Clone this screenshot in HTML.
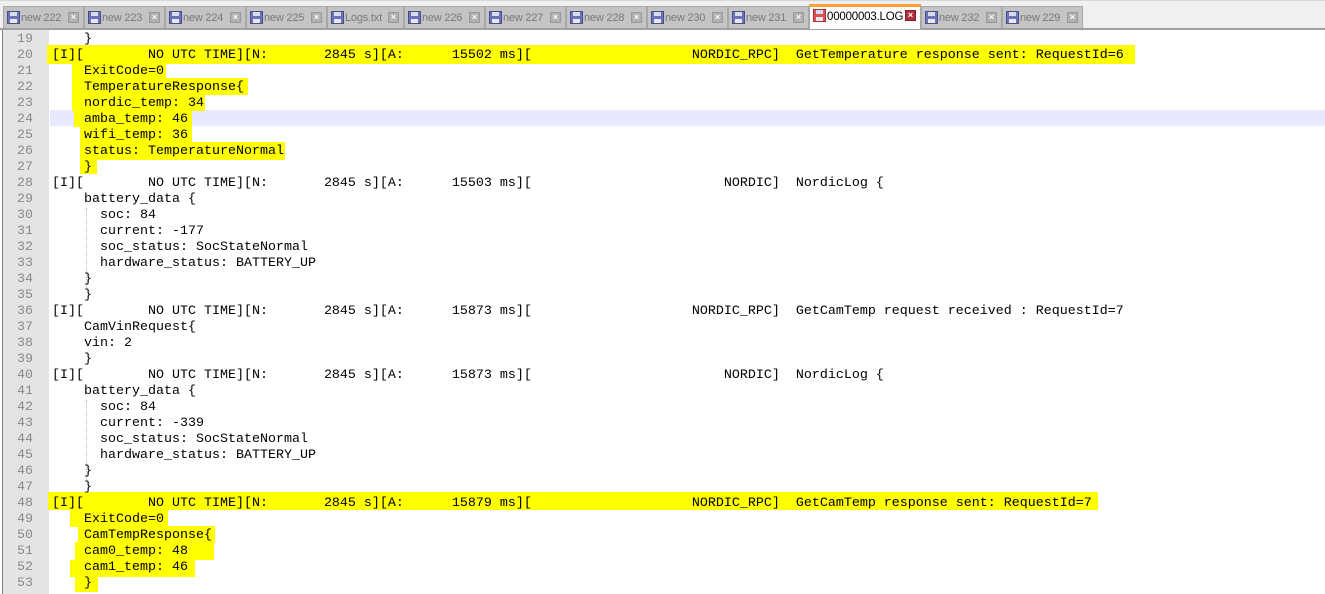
<!DOCTYPE html>
<html><head><meta charset="utf-8"><style>
*{margin:0;padding:0;box-sizing:border-box}
body{width:1325px;height:594px;overflow:hidden;background:#fff;position:relative;font-family:"Liberation Mono",monospace}
#bar{position:absolute;left:0;top:0;width:1325px;height:30px;background:#f0f0f0;border-top:1px solid #d8d8d8}
#bar .line{position:absolute;left:0;top:27px;width:1325px;height:2px;background:#a0a0a0}
.tab{position:absolute;top:5px;height:22px;background:#c4c4c4;border:1px solid #a8a8a8;border-bottom:none;font:11px "Liberation Sans",sans-serif;letter-spacing:-0.2px;color:#7a7a7a;line-height:22px;padding-left:17px;white-space:nowrap}
.tab .ic{position:absolute;left:3px;top:4px;width:13px;height:13px;background:#6b74b8;border:1px solid #4b4f86}
.tab .ic:before{content:"";position:absolute;left:2px;top:0;width:7px;height:4px;background:#d8dcf0}
.tab .ic:after{content:"";position:absolute;left:2px;top:7px;width:7px;height:4px;background:#e8e8f0}
.tab .x{position:absolute;right:4px;top:5px;width:11px;height:11px;background:#b0b0b0;border:1px solid #999;color:#fff;font:bold 9px/9px "Liberation Sans",sans-serif;text-align:center;letter-spacing:0}
.tab.act{background:#fff;top:3px;height:25px;border-top:3px solid #f9a23c;color:#000;line-height:20px;font-size:11.5px}
.tab.act .ic{background:#e05050;border-color:#a03030;top:2px}
.tab.act .x{background:#b03040;border-color:#802030;top:3px}
#gut{position:absolute;left:2px;top:30px;width:47px;height:564px;background:#e4e4e4;border-left:1px solid #808080}
#ed{position:absolute;left:0;top:32px;width:1325px}
.l{position:relative;height:16px;font-size:13.33px;line-height:16px;white-space:pre;color:#000}
.n{position:absolute;left:0;width:33px;text-align:right;color:#8a8a8a}
.t{position:absolute;left:52px}
.hl{position:absolute;background:#ffff00}
.dot{position:absolute;left:86px;width:0;border-left:1px dotted #bbb}
</style></head><body>
<div id="bar"><div class="line"></div>
<div class="tab" style="left:3px;width:81px"><span class="ic"></span>new 222<span class="x">×</span></div>
<div class="tab" style="left:84px;width:81px"><span class="ic"></span>new 223<span class="x">×</span></div>
<div class="tab" style="left:165px;width:81px"><span class="ic"></span>new 224<span class="x">×</span></div>
<div class="tab" style="left:246px;width:81px"><span class="ic"></span>new 225<span class="x">×</span></div>
<div class="tab" style="left:327px;width:77px"><span class="ic"></span>Logs.txt<span class="x">×</span></div>
<div class="tab" style="left:404px;width:81px"><span class="ic"></span>new 226<span class="x">×</span></div>
<div class="tab" style="left:485px;width:81px"><span class="ic"></span>new 227<span class="x">×</span></div>
<div class="tab" style="left:566px;width:81px"><span class="ic"></span>new 228<span class="x">×</span></div>
<div class="tab" style="left:647px;width:81px"><span class="ic"></span>new 230<span class="x">×</span></div>
<div class="tab" style="left:728px;width:81px"><span class="ic"></span>new 231<span class="x">×</span></div>
<div class="tab act" style="left:809px;width:112px"><span class="ic"></span>00000003.LOG<span class="x">×</span></div>
<div class="tab" style="left:921px;width:81px"><span class="ic"></span>new 232<span class="x">×</span></div>
<div class="tab" style="left:1002px;width:81px"><span class="ic"></span>new 229<span class="x">×</span></div>
</div>
<div id="gut"></div>
<div style="position:absolute;left:50px;top:110px;width:1275px;height:16px;background:#e8e8ff"></div>
<div class="hl" style="left:47px;top:45px;width:1088px;height:19px"></div>
<div class="hl" style="left:72px;top:62px;width:94px;height:17px"></div>
<div class="hl" style="left:72px;top:78px;width:176px;height:17px"></div>
<div class="hl" style="left:72px;top:94px;width:133px;height:17px"></div>
<div class="hl" style="left:74px;top:110px;width:118px;height:17px"></div>
<div class="hl" style="left:80px;top:126px;width:112px;height:17px"></div>
<div class="hl" style="left:80px;top:142px;width:205px;height:18px"></div>
<div class="hl" style="left:80px;top:158px;width:17px;height:16px"></div>
<div class="hl" style="left:48px;top:492px;width:1050px;height:18px"></div>
<div class="hl" style="left:70px;top:510px;width:98px;height:17px"></div>
<div class="hl" style="left:78px;top:526px;width:137px;height:17px"></div>
<div class="hl" style="left:75px;top:542px;width:139px;height:18px"></div>
<div class="hl" style="left:70px;top:560px;width:125px;height:17px"></div>
<div class="hl" style="left:75px;top:576px;width:23px;height:16px"></div>
<div class="dot" style="top:208px;height:80px"></div>
<div class="dot" style="top:400px;height:80px"></div>
<div id="ed">
<div class="l"><span class="n">19</span><span class="t">    }</span></div>
<div class="l"><span class="n">20</span><span class="t">[I][        NO UTC TIME][N:       2845 s][A:      15502 ms][                    NORDIC_RPC]  GetTemperature response sent: RequestId=6</span></div>
<div class="l"><span class="n">21</span><span class="t">    ExitCode=0</span></div>
<div class="l"><span class="n">22</span><span class="t">    TemperatureResponse{</span></div>
<div class="l"><span class="n">23</span><span class="t">    nordic_temp: 34</span></div>
<div class="l"><span class="n">24</span><span class="t">    amba_temp: 46</span></div>
<div class="l"><span class="n">25</span><span class="t">    wifi_temp: 36</span></div>
<div class="l"><span class="n">26</span><span class="t">    status: TemperatureNormal</span></div>
<div class="l"><span class="n">27</span><span class="t">    }</span></div>
<div class="l"><span class="n">28</span><span class="t">[I][        NO UTC TIME][N:       2845 s][A:      15503 ms][                        NORDIC]  NordicLog {</span></div>
<div class="l"><span class="n">29</span><span class="t">    battery_data {</span></div>
<div class="l"><span class="n">30</span><span class="t">      soc: 84</span></div>
<div class="l"><span class="n">31</span><span class="t">      current: -177</span></div>
<div class="l"><span class="n">32</span><span class="t">      soc_status: SocStateNormal</span></div>
<div class="l"><span class="n">33</span><span class="t">      hardware_status: BATTERY_UP</span></div>
<div class="l"><span class="n">34</span><span class="t">    }</span></div>
<div class="l"><span class="n">35</span><span class="t">    }</span></div>
<div class="l"><span class="n">36</span><span class="t">[I][        NO UTC TIME][N:       2845 s][A:      15873 ms][                    NORDIC_RPC]  GetCamTemp request received : RequestId=7</span></div>
<div class="l"><span class="n">37</span><span class="t">    CamVinRequest{</span></div>
<div class="l"><span class="n">38</span><span class="t">    vin: 2</span></div>
<div class="l"><span class="n">39</span><span class="t">    }</span></div>
<div class="l"><span class="n">40</span><span class="t">[I][        NO UTC TIME][N:       2845 s][A:      15873 ms][                        NORDIC]  NordicLog {</span></div>
<div class="l"><span class="n">41</span><span class="t">    battery_data {</span></div>
<div class="l"><span class="n">42</span><span class="t">      soc: 84</span></div>
<div class="l"><span class="n">43</span><span class="t">      current: -339</span></div>
<div class="l"><span class="n">44</span><span class="t">      soc_status: SocStateNormal</span></div>
<div class="l"><span class="n">45</span><span class="t">      hardware_status: BATTERY_UP</span></div>
<div class="l"><span class="n">46</span><span class="t">    }</span></div>
<div class="l"><span class="n">47</span><span class="t">    }</span></div>
<div class="l"><span class="n">48</span><span class="t">[I][        NO UTC TIME][N:       2845 s][A:      15879 ms][                    NORDIC_RPC]  GetCamTemp response sent: RequestId=7</span></div>
<div class="l"><span class="n">49</span><span class="t">    ExitCode=0</span></div>
<div class="l"><span class="n">50</span><span class="t">    CamTempResponse{</span></div>
<div class="l"><span class="n">51</span><span class="t">    cam0_temp: 48</span></div>
<div class="l"><span class="n">52</span><span class="t">    cam1_temp: 46</span></div>
<div class="l"><span class="n">53</span><span class="t">    }</span></div>
</div>
</body></html>
